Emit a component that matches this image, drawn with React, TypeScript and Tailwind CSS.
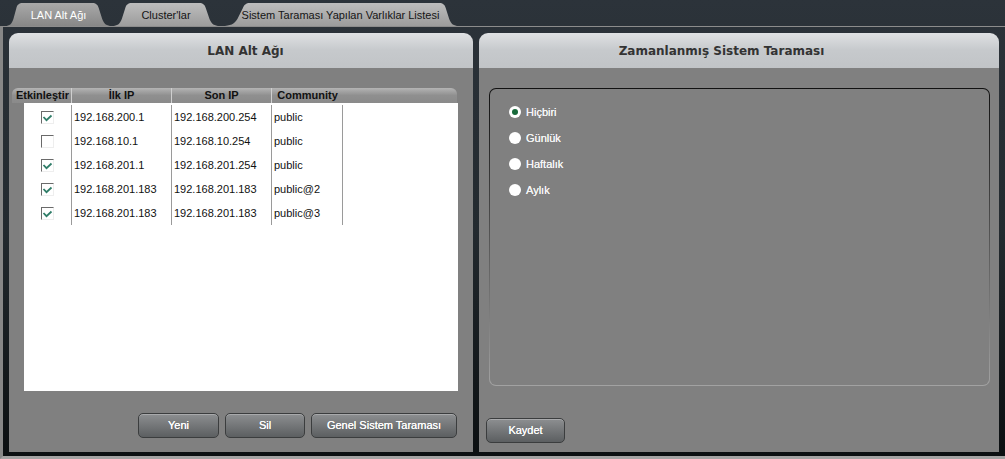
import React from "react";

const ROWS = [
  { on: true, first: "192.168.200.1", last: "192.168.200.254", community: "public" },
  { on: false, first: "192.168.10.1", last: "192.168.10.254", community: "public" },
  { on: true, first: "192.168.201.1", last: "192.168.201.254", community: "public" },
  { on: true, first: "192.168.201.183", last: "192.168.201.183", community: "public@2" },
  { on: true, first: "192.168.201.183", last: "192.168.201.183", community: "public@3" },
];

const SCHEDULES = ["Hiçbiri", "Günlük", "Haftalık", "Aylık"];

function Tab({ label, width, sl, sr, active, id }: { label: string; width: number; sl: number; sr: number; active?: boolean; id: string }) {
  const w = width;
  const d = `M0 23 C${sl * 0.4} 23 ${sl * 0.55} 21 ${sl * 0.7} 16 L${sl * 0.95} 5 C${sl} 2 ${sl + 2} 0 ${sl + 6} 0 H${w - sr - 6} C${w - sr - 2} 0 ${w - sr} 2 ${w - sr * 0.95} 5 L${w - sr * 0.7} 16 C${w - sr * 0.55} 21 ${w - sr * 0.4} 23 ${w} 23 Z`;
  return (
    <div className={`relative h-[23px] flex items-center justify-center ${active ? "z-10" : "z-0"}`} style={{ width }}>
      <svg className="absolute inset-0" width={w} height={23} viewBox={`0 0 ${w} 23`}>
        <defs>
          <linearGradient id={id} x1="0" y1="0" x2="0" y2="1">
            <stop offset="0" stopColor={active ? "#a9a9a9" : "#bdbdbd"} />
            <stop offset="1" stopColor={active ? "#878787" : "#9c9c9c"} />
          </linearGradient>
        </defs>
        <path d={d} fill={`url(#${id})`} />
      </svg>
      <span className={`relative text-[11px] pt-px ${active ? "text-white" : "text-[#151515]"}`}>{label}</span>
    </div>
  );
}

function Check({ on }: { on: boolean }) {
  return (
    <div className="w-[13px] h-[13px] bg-white border-t border-l border-[#6a6a6a] border-r border-b border-r-[#eeeeee] border-b-[#eeeeee] flex items-end justify-center pb-px">
      {on && (
        <svg width="11" height="8" viewBox="0 0 11 8">
          <path d="M1.5 3 L4.5 6.2 L9.5 1.5" fill="none" stroke="#2f7d68" strokeWidth="1.8" />
        </svg>
      )}
    </div>
  );
}

function Button({ label, className = "" }: { label: string; className?: string }) {
  return (
    <button className={`h-[25px] rounded-[5px] border border-[#3b3d3e] bg-gradient-to-b from-[#8d8f91] to-[#5c5f61] shadow-[inset_0_1px_0_rgba(255,255,255,0.25)] text-white text-[11px] [text-shadow:0_0_0.4px_#fff] ${className}`}>
      {label}
    </button>
  );
}

function PanelHeader({ title, className = "" }: { title: string; className?: string }) {
  return (
    <div className={`h-[35px] rounded-t-[9px] bg-gradient-to-b from-[#dfe1e3] via-[#c6c9cc] to-[#c1c4c7] flex items-center justify-center ${className}`}>
      <span className="text-[12px] font-bold text-[#333] [font-family:'DejaVu_Sans',sans-serif]">{title}</span>
    </div>
  );
}

export default function App() {
  return (
    <div className="w-[1005px] h-[459px] overflow-hidden flex flex-col bg-gradient-to-b from-[#2c333a] via-[#232a2f] to-[#0b0f11] [font-family:'Liberation_Sans',Arial,sans-serif]">
      {/* Tabs */}
      <div className="h-[26px] flex items-end pl-[5px]">
        <Tab id="t1" label="LAN Alt Ağı" width={107} sl={12} sr={14} active />
        <Tab id="t2" label="Cluster'lar" width={108} sl={14} sr={15} />
        <div className="w-[2px]" />
        <Tab id="t3" label="Sistem Taraması Yapılan Varlıklar Listesi" width={237} sl={22} sr={14} />
      </div>

      {/* Content frame */}
      <div className="flex-1 flex gap-[6px] border-t border-[#8c8c8c] border-l-[3px] border-l-[#878787] border-b-[3px] border-b-[#a3a3a3] pt-[6px] pl-[6px] pr-[6px] pb-[4px]">
        {/* Left panel */}
        <div className="w-[464px] flex flex-col">
          <PanelHeader title="LAN Alt Ağı" className="pl-[9px]" />
          <div className="flex-1 bg-[#808080] flex flex-col pt-[20px]">
            {/* Table header */}
            <div className="ml-[3px] w-[445px] h-[15px] rounded-t-[6px] bg-gradient-to-b from-[#b4b4b4] via-[#8f8f8f] to-[#8a8a8a] flex text-[11px] font-bold text-[#111] leading-[15px]">
              <div className="w-[60px] pl-[2px] text-center border-r border-[#cfcfcf]">Etkinleştir</div>
              <div className="w-[100px] text-center border-r border-[#cfcfcf]">İlk IP</div>
              <div className="w-[100px] text-center border-r border-[#cfcfcf]">Son IP</div>
              <div className="w-[71px] text-center">Community</div>
            </div>
            {/* Table body */}
            <div className="ml-[15px] w-[434px] h-[288px] bg-white pt-[2px]">
              {ROWS.map((r, i) => (
                <div key={i} className="flex h-[24px] text-[11px] text-[#111]">
                  <div className="w-[48px] flex items-center justify-center border-r border-[#9a9a9a]">
                    <Check on={r.on} />
                  </div>
                  <div className="w-[100px] pl-[2px] flex items-center border-r border-[#9a9a9a]">{r.first}</div>
                  <div className="w-[100px] pl-[2px] flex items-center border-r border-[#9a9a9a]">{r.last}</div>
                  <div className="w-[71px] pl-[2px] flex items-center border-r border-[#9a9a9a]">{r.community}</div>
                </div>
              ))}
            </div>
            <div className="flex justify-end gap-[6px] mt-[22px] pr-[16px]">
              <Button label="Yeni" className="w-[81px]" />
              <Button label="Sil" className="w-[80px]" />
              <Button label="Genel Sistem Taraması" className="w-[146px]" />
            </div>
          </div>
        </div>

        {/* Right panel */}
        <div className="flex-1 flex flex-col">
          <PanelHeader title="Zamanlanmış Sistem Taraması" className="pr-[35px]" />
          <div className="flex-1 bg-[#808080] flex flex-col pt-[20px]">
            <div className="ml-[10px] w-[501px] h-[298px] rounded-[7px] p-px bg-gradient-to-b from-[#111] via-[#555] to-[#a2a2a2]">
              <div className="w-full h-full rounded-[6px] bg-[#808080] pt-[17px] pl-[19px] flex flex-col gap-[14px]">
                {SCHEDULES.map((s, i) => (
                  <div key={s} className="flex items-center gap-[5px] h-[12px]">
                    <div className="w-[12px] h-[12px] rounded-full bg-white flex items-center justify-center">
                      {i === 0 && <div className="w-[6px] h-[6px] rounded-full bg-[#17693a]" />}
                    </div>
                    <span className="text-[11px] text-[#f4f4f4] [text-shadow:0_0_0.4px_#fff]">{s}</span>
                  </div>
                ))}
              </div>
            </div>
            <div className="mt-[31px] pl-[7px]">
              <Button label="Kaydet" className="w-[79px]" />
            </div>
          </div>
        </div>
      </div>
    </div>
  );
}
